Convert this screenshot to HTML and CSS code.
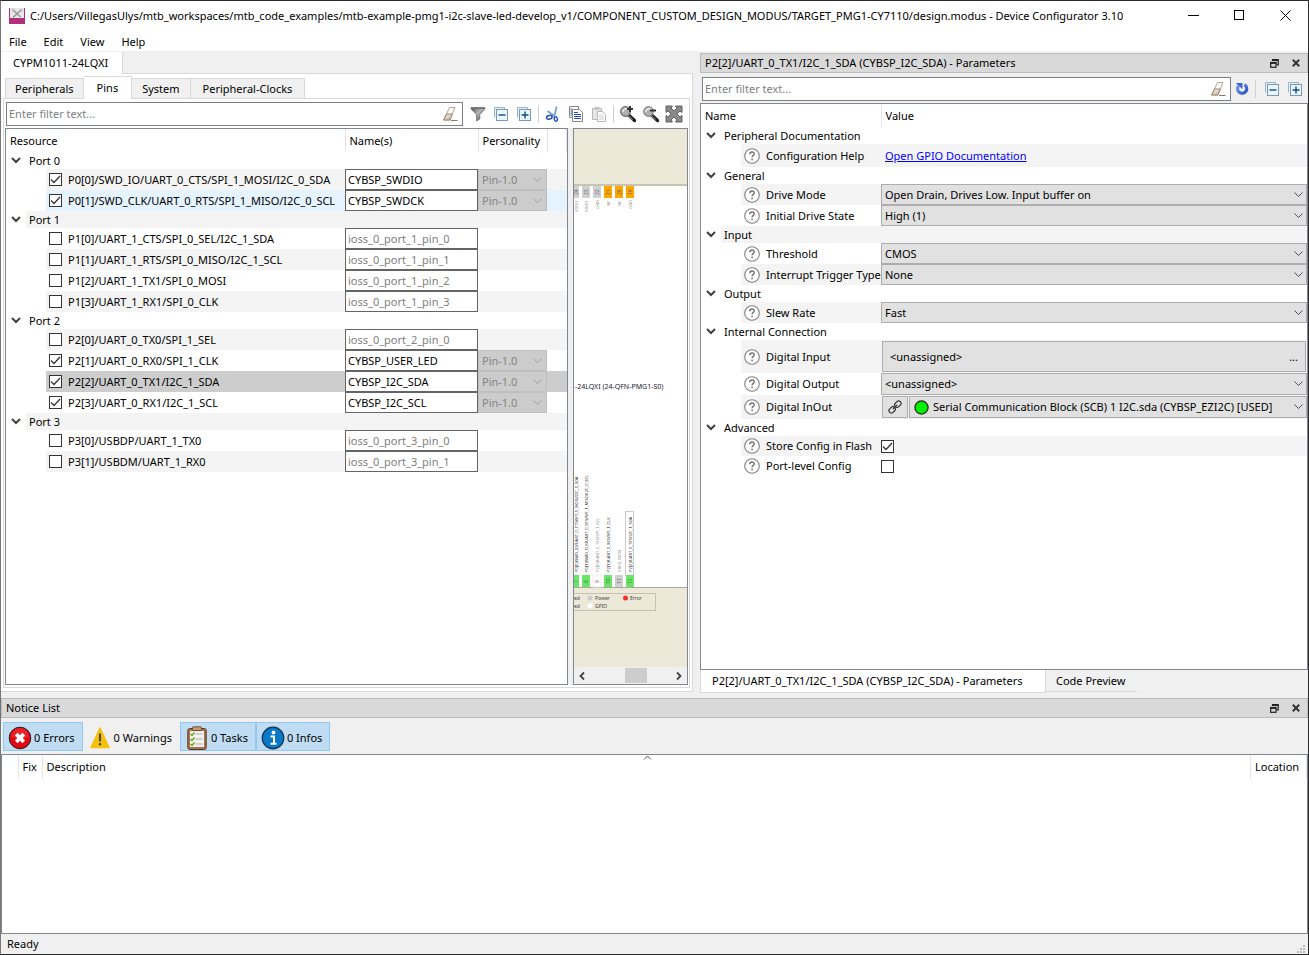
FILE: index.html
```
<!DOCTYPE html>
<html lang="en">
<head>
<meta charset="utf-8">
<title>Device Configurator 3.10</title>
<link rel="stylesheet" href="styles.css">
</head>
<body>
<svg class="defs" aria-hidden="true">
  <defs>
    <linearGradient id="gMetal" x1="0" y1="0" x2="1" y2="1"><stop offset="0" stop-color="#4a4a4a"/><stop offset=".45" stop-color="#b5b5b5"/><stop offset="1" stop-color="#444"/></linearGradient>
    <linearGradient id="gErase" x1="0" y1="0" x2="1" y2="1"><stop offset="0" stop-color="#fff"/><stop offset="1" stop-color="#b9a48c"/></linearGradient>
    <linearGradient id="gBlue" x1="0" y1="0" x2="1" y2="1"><stop offset="0" stop-color="#7fa4ee"/><stop offset="1" stop-color="#1d4fc0"/></linearGradient>
  </defs>
  <symbol id="chev" viewBox="0 0 10 8"><path d="M1 2l4 4 4-4" fill="none" stroke="#404040" stroke-width="2"/></symbol>
  <symbol id="help" viewBox="0 0 16 16"><circle cx="8" cy="8" r="7.3" fill="#fff" stroke="#808080" stroke-width="1.1"/><path d="M5.8 6.3c0-3 4.4-3 4.4-.4 0 1.5-2.1 1.6-2.1 3.4" fill="none" stroke="#757575" stroke-width="1.5"/><rect x="7.3" y="10.6" width="1.6" height="1.6" fill="#757575"/></symbol>
  <symbol id="eraser" viewBox="0 0 16 16"><path d="M7.500 1.500h5.500l-5 12.500H1.500z" fill="#fbf8f4" stroke="#b5a793"/><path d="M4.800 8h5.600l-2.400 6H1.500z" fill="url(#gErase)" stroke="#9c8a74"/><path d="M9 14.500h6.500" stroke="#8f7a60"/></symbol>
  <symbol id="minus" viewBox="0 0 14 14"><path d="M.5 10.500V.5h10v2" fill="#e3f0f8" stroke="#9ab4c8"/><rect x="2.500" y="2.500" width="11" height="11" fill="#eaf6fd" stroke="#7d97ae"/><path d="M4.500 8h7" stroke="#0c4d8c" stroke-width="1.400"/></symbol>
  <symbol id="plus" viewBox="0 0 14 14"><path d="M.5 10.500V.5h10v2" fill="#e3f0f8" stroke="#9ab4c8"/><rect x="2.500" y="2.500" width="11" height="11" fill="#eaf6fd" stroke="#7d97ae"/><path d="M4.500 8h7M8 4.500v7" stroke="#0c4d8c" stroke-width="1.400"/></symbol>
  <symbol id="float" viewBox="0 0 9 9"><path d="M2.500 2V.8h5.700v5H6.500" fill="none" stroke="#222" stroke-width="1.200"/><path d="M2 1h6.500" stroke="#222" stroke-width="2"/><rect x=".7" y="3.500" width="5.300" height="4.800" fill="none" stroke="#222" stroke-width="1.200"/><path d="M.2 4h6.300" stroke="#222" stroke-width="1.800"/></symbol>
  <symbol id="x" viewBox="0 0 8 8"><path d="M.8.8l6.400 6.400M7.200.8L.8 7.200" stroke="#333" stroke-width="2"/></symbol>
</svg>

<div class="window">
  <header class="titlebar">
    <svg class="i16" viewBox="0 0 16 16"><rect width="16" height="16" fill="#b0307c"/><rect x="1" width="14" height="10" fill="#e9e9e9"/><path d="M3.500 1.500l8 7.500M12.500 1.500L4 9.500" stroke="#999" stroke-width="1.700"/><path d="M3 1l3 .5-2.500 2zM11 1.500l3 .5-2 2z" fill="#fff" stroke="#999" stroke-width=".6"/></svg>
    <span class="grow">C:/Users/VillegasUlys/mtb_workspaces/mtb_code_examples/mtb-example-pmg1-i2c-slave-led-develop_v1/COMPONENT_CUSTOM_DESIGN_MODUS/TARGET_PMG1-CY7110/design.modus - Device Configurator 3.10</span>
    <button class="winbtn" aria-label="Minimize"><svg class="i11" viewBox="0 0 11 11"><path d="M0 5.500h11" stroke="#000"/></svg></button>
    <button class="winbtn" aria-label="Maximize"><svg class="i11" viewBox="0 0 11 11"><rect x=".5" y=".5" width="9" height="9" fill="none" stroke="#000"/></svg></button>
    <button class="winbtn" aria-label="Close"><svg class="i11" viewBox="0 0 11 11"><path d="M.5.5l10 10M10.500.5l-10 10" stroke="#000"/></svg></button>
  </header>
  <nav class="menubar"><button>File</button><button>Edit</button><button>View</button><button>Help</button></nav>

  <main class="workspace">
    <section class="device">
      <div class="doctabs"><button class="doctab">CYPM1011-24LQXI</button></div>
      <div class="docpane">
        <div class="tabs"><button>Peripherals</button><button class="on">Pins</button><button>System</button><button>Peripheral-Clocks</button></div>
        <div class="pinpane">
          <div class="toolbar">
            <div class="filter"><input type="text" placeholder="Enter filter text..." aria-label="Filter resources"><svg class="i16" ><use href="#eraser"/></svg></div>
            <button aria-label="Filter"><svg class="i16" viewBox="0 0 16 16"><path d="M1 1.500h14v1.500L9.800 8.500V13L6.500 15V8.500L1 3z" fill="url(#gMetal)" stroke="#666" stroke-width=".7"/><path d="M1 2.200h14" stroke="#777" stroke-width="1.500"/></svg></button>
            <button aria-label="Collapse all"><svg class="i14"><use href="#minus"/></svg></button>
            <button aria-label="Expand all"><svg class="i14"><use href="#plus"/></svg></button>
            <i class="sep"></i>
            <button aria-label="Cut"><svg class="i16" viewBox="0 0 16 16"><path d="M11.500.5L10 8 7 10.500M2.500 5l5.500 4 2.500 2" fill="none" stroke="#7da0cc" stroke-width="1.800"/><ellipse cx="4.300" cy="11.300" rx="2.800" ry="1.800" fill="none" stroke="#2452c4" stroke-width="1.500" transform="rotate(-15 4.300 11.300)"/><ellipse cx="10.800" cy="13" rx="1.500" ry="2.200" fill="none" stroke="#2452c4" stroke-width="1.500" transform="rotate(-15 10.800 13)"/></svg></button>
            <button aria-label="Copy"><svg class="i16" viewBox="0 0 16 16"><path d="M1.500.5h9v11h-9z" fill="#fff" stroke="#888"/><path d="M4.500 3.500h7l3 3v9h-10z" fill="#fff" stroke="#888"/><path d="M2.500 3h1.500M2.500 5h1.500M2.500 7h1.500M2.500 9h1.500M6 6.500h4M6 8.500h7M6 10.500h7M6 12.500h7" stroke="#234bb0"/></svg></button>
            <button aria-label="Paste" class="pale"><svg class="i16" viewBox="0 0 16 16"><path d="M1.500 2.500h9v11h-9z" fill="#ddd" stroke="#999"/><path d="M3.500.8h5v3h-5z" fill="#aaa"/><path d="M6.500 5.500h5l3 3v7h-8z" fill="#fff" stroke="#999"/><path d="M8 9h4M8 11h5M8 13h5" stroke="#bbb"/></svg></button>
            <i class="sep"></i>
            <button aria-label="Zoom in"><svg class="i18" viewBox="0 0 18 18"><path d="M9.500 10l6 5.500" stroke="#222" stroke-width="3.400" stroke-linecap="round"/><path d="M9 10.500l4.500 4.200" stroke="#aaa" stroke-width="1"/><circle cx="6.500" cy="6.500" r="4.800" fill="#b0b0b0" stroke="#666" stroke-width="1.200"/><path d="M3.500 7c1-4 5-4 6-2" fill="none" stroke="#eee" stroke-width="1.400"/><path d="M11 1v6M8 4h6" stroke="#333" stroke-width="2"/></svg></button>
            <button aria-label="Zoom out"><svg class="i18" viewBox="0 0 18 18"><path d="M9.500 10l6 5.500" stroke="#222" stroke-width="3.400" stroke-linecap="round"/><path d="M9 10.500l4.500 4.200" stroke="#aaa" stroke-width="1"/><circle cx="6.500" cy="6.500" r="4.800" fill="#b0b0b0" stroke="#888" stroke-width="1.200"/><path d="M3.500 7c1-4 5-4 6-2" fill="none" stroke="#eee" stroke-width="1.400"/><path d="M8 5.500h6" stroke="#333" stroke-width="2"/></svg></button>
            <button aria-label="Zoom to fit"><svg class="i18" viewBox="0 0 18 18"><path d="M1 1h6.500L6 3l3 3 3-3-1.500-2H17v6.500L15 6l-3 3 3 3 2-1.500V17h-6.500l1.500-2-3-3-3 3 1.500 2H1v-6.500L3 12l3-3-3-3-2 1.500z" fill="#8a8a8a" stroke="#555" stroke-width=".9"/></svg></button>
          </div>
          <div class="split">
            <div class="tree">
              <table class="pins">
                <colgroup><col class="cRes"><col class="cName"><col class="cPers"><col></colgroup>
                <thead><tr><th>Resource</th><th>Name(s)</th><th>Personality</th><th></th></tr></thead>
                <tbody>
                <tr class="group"><td colspan="4"><div class="g"><svg class="chev"><use href="#chev"/></svg><span>Port 0</span></div></td></tr>
                <tr class="alt"><td><label><input type="checkbox" checked>P0[0]/SWD_IO/UART_0_CTS/SPI_1_MOSI/I2C_0_SDA</label></td><td><input type="text" value="CYBSP_SWDIO" aria-label="Name of P0[0]"></td><td><select disabled aria-label="Personality of P0[0]"><option>Pin-1.0</option></select></td><td></td></tr>
                <tr class="hover"><td><label><input type="checkbox" checked>P0[1]/SWD_CLK/UART_0_RTS/SPI_1_MISO/I2C_0_SCL</label></td><td><input type="text" value="CYBSP_SWDCK" aria-label="Name of P0[1]"></td><td><select disabled aria-label="Personality of P0[1]"><option>Pin-1.0</option></select></td><td></td></tr>
                <tr class="group alt"><td colspan="4"><div class="g"><svg class="chev"><use href="#chev"/></svg><span>Port 1</span></div></td></tr>
                <tr><td><label><input type="checkbox">P1[0]/UART_1_CTS/SPI_0_SEL/I2C_1_SDA</label></td><td><input type="text" placeholder="ioss_0_port_1_pin_0" aria-label="Name of P1[0]"></td><td></td><td></td></tr>
                <tr class="alt"><td><label><input type="checkbox">P1[1]/UART_1_RTS/SPI_0_MISO/I2C_1_SCL</label></td><td><input type="text" placeholder="ioss_0_port_1_pin_1" aria-label="Name of P1[1]"></td><td></td><td></td></tr>
                <tr><td><label><input type="checkbox">P1[2]/UART_1_TX1/SPI_0_MOSI</label></td><td><input type="text" placeholder="ioss_0_port_1_pin_2" aria-label="Name of P1[2]"></td><td></td><td></td></tr>
                <tr class="alt"><td><label><input type="checkbox">P1[3]/UART_1_RX1/SPI_0_CLK</label></td><td><input type="text" placeholder="ioss_0_port_1_pin_3" aria-label="Name of P1[3]"></td><td></td><td></td></tr>
                <tr class="group"><td colspan="4"><div class="g"><svg class="chev"><use href="#chev"/></svg><span>Port 2</span></div></td></tr>
                <tr class="alt"><td><label><input type="checkbox">P2[0]/UART_0_TX0/SPI_1_SEL</label></td><td><input type="text" placeholder="ioss_0_port_2_pin_0" aria-label="Name of P2[0]"></td><td></td><td></td></tr>
                <tr><td><label><input type="checkbox" checked>P2[1]/UART_0_RX0/SPI_1_CLK</label></td><td><input type="text" value="CYBSP_USER_LED" aria-label="Name of P2[1]"></td><td><select disabled aria-label="Personality of P2[1]"><option>Pin-1.0</option></select></td><td></td></tr>
                <tr class="selected"><td><label><input type="checkbox" checked>P2[2]/UART_0_TX1/I2C_1_SDA</label></td><td><input type="text" value="CYBSP_I2C_SDA" aria-label="Name of P2[2]"></td><td><select disabled aria-label="Personality of P2[2]"><option>Pin-1.0</option></select></td><td></td></tr>
                <tr><td><label><input type="checkbox" checked>P2[3]/UART_0_RX1/I2C_1_SCL</label></td><td><input type="text" value="CYBSP_I2C_SCL" aria-label="Name of P2[3]"></td><td><select disabled aria-label="Personality of P2[3]"><option>Pin-1.0</option></select></td><td></td></tr>
                <tr class="group alt"><td colspan="4"><div class="g"><svg class="chev"><use href="#chev"/></svg><span>Port 3</span></div></td></tr>
                <tr><td><label><input type="checkbox">P3[0]/USBDP/UART_1_TX0</label></td><td><input type="text" placeholder="ioss_0_port_3_pin_0" aria-label="Name of P3[0]"></td><td></td><td></td></tr>
                <tr class="alt"><td><label><input type="checkbox">P3[1]/USBDM/UART_1_RX0</label></td><td><input type="text" placeholder="ioss_0_port_3_pin_1" aria-label="Name of P3[1]"></td><td></td><td></td></tr>
                </tbody>
              </table>
            </div>
            <div class="package">
              <svg class="chip" viewBox="0 0 113 538" preserveAspectRatio="xMinYMin slice">
                <rect width="113" height="538" fill="#fff"/>
                <rect width="113" height="56" fill="#ece9d8"/><rect y="55" width="113" height="2" fill="#c8c4b4"/>
                <rect y="458" width="113" height="80" fill="#ece9d8"/><rect y="458" width="113" height="1" fill="#aaa698"/>
                <g fill="#d0d0d0"><rect y="57" width="5" height="12"/><rect x="8" y="57" width="8" height="12"/><rect x="19" y="57" width="8" height="12"/><rect x="41" y="446" width="8" height="12"/></g>
                <g fill="#ffa500"><rect x="30" y="57" width="8" height="12"/><rect x="41" y="57" width="8" height="12"/><rect x="52" y="57" width="8" height="12"/></g>
                <g fill="#66e866"><rect y="446" width="5" height="12"/><rect x="8" y="446" width="8" height="12"/><rect x="30" y="446" width="8" height="12"/><rect x="52" y="446" width="8" height="12"/></g>
                <rect x="19" y="446" width="8" height="12" fill="#fff" stroke="#eee"/>
                <rect x="51.500" y="382.500" width="8" height="64" fill="#fff" stroke="#ccc"/>
                <rect x="52" y="446" width="8" height="12" fill="#66e866"/>
                <g class="pinno">
                  <text transform="translate(4 66) rotate(-90)">24</text><text transform="translate(14 66) rotate(-90)">23</text><text transform="translate(25 66) rotate(-90)">22</text><text transform="translate(36 66) rotate(-90)">21</text><text transform="translate(47 66) rotate(-90)">20</text><text transform="translate(58 66) rotate(-90)">19</text>
                  <text transform="translate(4 454) rotate(-90)">7</text><text transform="translate(14 454) rotate(-90)">8</text><text transform="translate(25 454) rotate(-90)">9</text><text transform="translate(36 455) rotate(-90)">10</text><text transform="translate(47 455) rotate(-90)">11</text><text transform="translate(58 455) rotate(-90)">12</text>
                </g>
                <g class="pin faint">
                  <text transform="translate(4 83) rotate(-90)">VDDD</text><text transform="translate(14 83) rotate(-90)">VDDD</text><text transform="translate(25 80) rotate(-90)">GND</text><text transform="translate(36 77) rotate(-90)">NC</text><text transform="translate(47 77) rotate(-90)">NC</text><text transform="translate(58 80) rotate(-90)">GND</text>
                  <text transform="translate(25 443) rotate(-90)">P2[0]/UART_0_TX0/SPI_1_SEL</text><text transform="translate(47 443) rotate(-90)">VBUS_MON</text>
                </g>
                <g class="pin">
                  <text transform="translate(4 443) rotate(-90)">P0[0]/SWD_IO/UART_0_CTS/SPI_1_MOSI/I2C_0_SDA</text><text transform="translate(14 443) rotate(-90)">P0[1]/SWD_CLK/UART_0_RTS/SPI_1_MISO/I2C_0_SCL</text><text transform="translate(36 443) rotate(-90)">P2[1]/UART_0_RX0/SPI_1_CLK</text><text transform="translate(58 443) rotate(-90)">P2[2]/UART_0_TX1/I2C_1_SDA</text>
                </g>
                <text class="part" x="1" y="260">-24LQXI (24-QFN-PMG1-S0)</text>
                <path d="M0 464.500h81.500v17H0" fill="none" stroke="#c6c1ae"/>
                <circle cx="16" cy="469" r="2.500" fill="#ccc"/><circle cx="16" cy="477" r="2.500" fill="#fff"/><circle cx="51.500" cy="469" r="2.500" fill="#f43030"/>
                <g class="legend"><text x="0" y="471">ed</text><text x="0" y="479">ed</text><text x="21" y="471">Power</text><text x="21" y="479">GPIO</text><text x="56" y="471">Error</text></g>
              </svg>
              <div class="hscroll"><svg class="arrow" viewBox="0 0 8 10"><path d="M6 1.500L2.500 5 6 8.500" fill="none" stroke="#444" stroke-width="1.800"/></svg><i class="thumb"></i><svg class="arrow" viewBox="0 0 8 10"><path d="M2 1.500L5.500 5 2 8.500" fill="none" stroke="#444" stroke-width="1.800"/></svg></div>
            </div>
          </div>
        </div>
      </div>
    </section>

    <section class="params">
      <div class="docktitle"><span class="grow">P2[2]/UART_0_TX1/I2C_1_SDA (CYBSP_I2C_SDA) - Parameters</span><button aria-label="Float panel"><svg class="i9"><use href="#float"/></svg></button><button aria-label="Close panel"><svg class="i8"><use href="#x"/></svg></button></div>
      <div class="toolbar">
        <div class="filter"><input type="text" placeholder="Enter filter text..." aria-label="Filter parameters"><svg class="i16"><use href="#eraser"/></svg></div>
        <button aria-label="Reset"><svg class="i14" viewBox="0 0 14 14"><path d="M9.300 2.600a4.600 4.600 0 1 1-5.600 1" fill="none" stroke="url(#gBlue)" stroke-width="3.200"/><path d="M.8 1h6.700v6.200z" fill="#3a68d4"/></svg></button>
        <i class="sep"></i>
        <button aria-label="Collapse all"><svg class="i14"><use href="#minus"/></svg></button>
        <button aria-label="Expand all"><svg class="i14"><use href="#plus"/></svg></button>
      </div>
      <div class="tree">
        <table class="props">
          <colgroup><col class="cProp"><col></colgroup>
          <thead><tr><th>Name</th><th>Value</th></tr></thead>
          <tbody>
          <tr class="group"><td colspan="2"><div class="g"><svg class="chev"><use href="#chev"/></svg><span>Peripheral Documentation</span></div></td></tr>
          <tr class="alt h23"><td><div class="p"><svg class="i16"><use href="#help"/></svg>Configuration Help</div></td><td><a href="#gpio">Open GPIO Documentation</a></td></tr>
          <tr class="group"><td colspan="2"><div class="g"><svg class="chev"><use href="#chev"/></svg><span>General</span></div></td></tr>
          <tr class="alt"><td><label class="p" for="drive"><svg class="i16"><use href="#help"/></svg>Drive Mode</label></td><td><select id="drive"><option>Open Drain, Drives Low. Input buffer on</option></select></td></tr>
          <tr><td><label class="p" for="state"><svg class="i16"><use href="#help"/></svg>Initial Drive State</label></td><td><select id="state"><option>High (1)</option></select></td></tr>
          <tr class="group alt"><td colspan="2"><div class="g"><svg class="chev"><use href="#chev"/></svg><span>Input</span></div></td></tr>
          <tr><td><label class="p" for="thr"><svg class="i16"><use href="#help"/></svg>Threshold</label></td><td><select id="thr"><option>CMOS</option></select></td></tr>
          <tr class="alt"><td><label class="p" for="trig"><svg class="i16"><use href="#help"/></svg>Interrupt Trigger Type</label></td><td><select id="trig"><option>None</option></select></td></tr>
          <tr class="group"><td colspan="2"><div class="g"><svg class="chev"><use href="#chev"/></svg><span>Output</span></div></td></tr>
          <tr class="alt"><td><label class="p" for="slew"><svg class="i16"><use href="#help"/></svg>Slew Rate</label></td><td><select id="slew"><option>Fast</option></select></td></tr>
          <tr class="group"><td colspan="2"><div class="g"><svg class="chev"><use href="#chev"/></svg><span>Internal Connection</span></div></td></tr>
          <tr class="alt h33"><td><label class="p" for="din"><svg class="i16"><use href="#help"/></svg>Digital Input</label></td><td><button class="pick" id="din"><span class="grow">&lt;unassigned&gt;</span><span>...</span></button></td></tr>
          <tr class="h22"><td><label class="p" for="dout"><svg class="i16"><use href="#help"/></svg>Digital Output</label></td><td><select id="dout"><option>&lt;unassigned&gt;</option></select></td></tr>
          <tr class="alt h24"><td><label class="p" for="dio"><svg class="i16"><use href="#help"/></svg>Digital InOut</label></td><td><div class="linked"><button class="link" aria-label="Go to connection"><svg class="i14" viewBox="0 0 14 14"><g transform="rotate(-45 7 7)" fill="none" stroke="#333" stroke-width="1.200"><rect x="-.5" y="4.600" width="7" height="4.800" rx="2.400"/><rect x="7.500" y="4.600" width="7" height="4.800" rx="2.400"/><path d="M4 7h6"/></g></svg></button><select id="dio" class="used"><option>Serial Communication Block (SCB) 1 I2C.sda (CYBSP_EZI2C) [USED]</option></select></div></td></tr>
          <tr class="group"><td colspan="2"><div class="g"><svg class="chev"><use href="#chev"/></svg><span>Advanced</span></div></td></tr>
          <tr class="alt h20"><td><label class="p" for="flash"><svg class="i16"><use href="#help"/></svg>Store Config in Flash</label></td><td><input type="checkbox" id="flash" checked></td></tr>
          <tr class="h20"><td><label class="p" for="port"><svg class="i16"><use href="#help"/></svg>Port-level Config</label></td><td><input type="checkbox" id="port"></td></tr>
          </tbody>
        </table>
      </div>
      <div class="docktabs"><button class="on">P2[2]/UART_0_TX1/I2C_1_SDA (CYBSP_I2C_SDA) - Parameters</button><button>Code Preview</button></div>
    </section>
  </main>

  <section class="notices">
    <div class="docktitle"><span class="grow">Notice List</span><button aria-label="Float panel"><svg class="i9"><use href="#float"/></svg></button><button aria-label="Close panel"><svg class="i8"><use href="#x"/></svg></button></div>
    <div class="counts">
      <button class="on"><svg class="i24" viewBox="0 0 24 24"><circle cx="12" cy="12" r="10.800" fill="#e30613" stroke="#222" stroke-width="1"/><path d="M3 11a9 9 0 0 1 18 0q-9 3-18 0z" fill="#f04040" opacity=".5"/><path d="M8.200 8.200l7.600 7.600M15.800 8.200l-7.600 7.600" stroke="#fff" stroke-width="3.800"/></svg>0 Errors</button>
      <button><svg class="i24" viewBox="0 0 24 24"><path d="M12 2L21 21.500H3z" fill="#f5c211" stroke="#f5c211" stroke-width="1.500" stroke-linejoin="round"/><path d="M12 7.500v8" stroke="#5a4a20" stroke-width="2.200"/><circle cx="12" cy="18.200" r="1.300" fill="#5a4a20"/></svg>0 Warnings</button>
      <button class="on"><svg class="i24" viewBox="0 0 24 24"><rect x="2.800" y="2.500" width="18.400" height="21" rx="2" fill="#a9714b" stroke="#5e3820" stroke-width="1"/><rect x="5" y="5" width="14" height="16" fill="#f4f2ee"/><rect x="7.500" y=".8" width="9" height="3.800" rx="1" fill="#c79b78" stroke="#5e3820" stroke-width=".8"/><path d="M10.500 8h7M10.500 13h7M10.500 18h7" stroke="#aaa" stroke-width="1.200"/><path d="M5.500 8l1.500 1.500L9.500 6.500M5.500 13l1.500 1.500 2.500-3M5.500 18l1.500 1.500 2.500-3" fill="none" stroke="#62a820" stroke-width="1.400"/></svg>0 Tasks</button>
      <button class="on"><svg class="i24" viewBox="0 0 24 24"><circle cx="12" cy="12" r="10.800" fill="#0878c8" stroke="#16324a" stroke-width="1.200"/><circle cx="12.500" cy="6.500" r="1.900" fill="#fff"/><path d="M9.500 10.500h3.500v7M9.500 17.800h6" fill="none" stroke="#fff" stroke-width="2"/></svg>0 Infos</button>
    </div>
    <div class="noticebox">
      <table class="log"><colgroup><col class="cMark"><col class="cFix"><col><col class="cLoc"></colgroup><thead><tr><th></th><th>Fix</th><th>Description</th><th>Location</th></tr></thead></table>
      <svg class="sort" viewBox="0 0 9 5"><path d="M1 4.500l3.500-3.500L8 4.500" fill="none" stroke="#555"/></svg>
    </div>
  </section>
  <footer class="status"><span class="grow">Ready</span><svg class="grip" viewBox="0 0 9 9"><path d="M6 0h2v2H6zM3 3h2v2H3zM6 3h2v2H6zM0 6h2v2H0zM3 6h2v2H3zM6 6h2v2H6z" fill="#bbb"/></svg></footer>
</div>
</body>
</html>
```
FILE: styles.css
```
* { box-sizing: border-box; }
body { margin: 0; }
body, button, input, select { font: 11px/16px "Noto Sans", "Open Sans", sans-serif; color: #000; }
button { border: 0; padding: 0; background: none; white-space: nowrap; }
svg { display: block; flex: none; }
.defs { position: absolute; width: 0; height: 0; }
.i8 { width: 8px; height: 8px; }
.i9 { width: 9px; height: 9px; }
.i11 { width: 11px; height: 11px; }
.i14 { width: 14px; height: 14px; }
.i16 { width: 16px; height: 16px; }
.i18 { width: 18px; height: 18px; }
.i24 { width: 24px; height: 24px; }
.grow { flex: 1; min-width: 0; text-align: left; }

.window { display: flex; flex-direction: column; height: 100vh; background: #f0f0f0; border: 1px solid #2b2b2b; border-left-color: #777; }

/* title and menu */
.titlebar { display: flex; align-items: center; height: 29px; padding-left: 8px; background: #fff; white-space: nowrap; }
.titlebar .grow { padding-left: 5px; overflow: hidden; }
.winbtn { display: grid; place-items: center; width: 46px; height: 29px; }
.menubar { display: flex; height: 21px; background: #fff; padding-left: 1px; }
.menubar button { padding: 2px 7px 0; }
.menubar button + button { padding-left: 10px; }

.workspace { flex: 1; min-height: 0; display: grid; grid-template-columns: minmax(0, 692fr) minmax(0, 608fr); gap: 7px; padding-top: 1px; }

/* device document */
.device { display: flex; flex-direction: column; min-height: 0; padding-bottom: 6px; }
.doctabs { display: flex; border-bottom: 1px solid #d9d9d9; }
.doctab { height: 22px; margin-bottom: -1px; padding: 0 12px; background: #fff; border-right: 1px solid #d9d9d9; min-width: 122px; text-align: left; }
.docpane { flex: 1; min-height: 0; display: flex; flex-direction: column; background: #fff; border-right: 1px solid #d9d9d9; border-bottom: 1px solid #d9d9d9; padding: 2px 2px 3px 2px; }
.tabs { display: flex; align-items: flex-end; padding-left: 2px; height: 22px; }
.tabs button { height: 20px; padding: 0 10px; background: #f0f0f0; border: 1px solid #d9d9d9; border-left: 0; border-bottom: 0; }
.tabs button:first-child { border-left: 1px solid #d9d9d9; padding: 0 9px; }
.tabs .on { height: 23px; margin-bottom: -1px; background: #fff; padding: 0 13px; z-index: 1; }
.tabs button:last-child { padding: 0 12px; }
.pinpane { flex: 1; min-height: 0; display: flex; flex-direction: column; border: 1px solid #d9d9d9; padding: 2px 1px; }

.toolbar { display: flex; align-items: center; gap: 9px; height: 27px; }
.toolbar button { display: grid; place-items: center; }
.device .toolbar { gap: 7px; padding: 0 6px 2px 0; }
.device .toolbar button { width: 16px; height: 18px; place-content: center; }
.filter { flex: 1; display: flex; align-items: center; height: 24px; margin-left: 1px; padding-right: 4px; background: #fff; border: 1px solid #7a7f88; }
.filter input { flex: 1; min-width: 0; border: 0; padding: 0 2px; background: none; outline: 0; }
::placeholder { color: #808080; opacity: 1; }
.sep { width: 1px; height: 18px; background: #d0d0d0; }
.device .sep { margin: 0 -1px; }
.pale { opacity: .7; }

.split { flex: 1; min-height: 0; display: grid; grid-template-columns: minmax(0, 563fr) minmax(0, 115fr); gap: 5px; background: #f0f0f0; }
.tree { background: #fff; border: 1px solid #828790; overflow: hidden; min-height: 0; }
table { width: 100%; border-collapse: collapse; table-layout: fixed; }
td, th { padding: 0; height: 21px; text-align: left; font-weight: normal; white-space: nowrap; }
th { height: 23px; padding: 1px 4px 0; border-right: 1px solid #e5e5e5; }
.cRes { width: 339px; }
.cName { width: 133px; }
.cPers { width: 69px; }
.cProp { width: 180px; }
.group td { height: 17px; }
.g { display: flex; align-items: center; height: 17px; }
.g span { flex: 1; height: 17px; line-height: 17px; padding-left: 3px; }
.chev { width: 10px; height: 8px; margin: 0 5px 2px; }
.alt .g span, .alt label, .alt td + td, .alt .p { background: #f4f4f4; }
.hover label, .hover td + td { background: #e5f3ff; }
.selected label, .selected td + td { background: #cdcdcd; }

.pins label { display: flex; align-items: center; gap: 6px; height: 21px; margin-left: 40px; padding-left: 3px; }
.pins input[type=text] { display: block; width: 100%; height: 21px; padding: 0 2px; background: #fff; border: 1px solid #646464; border-radius: 0; }
input[type=checkbox] { appearance: none; display: block; flex: none; width: 13px; height: 13px; margin: 0; background: #fff; border: 1px solid #333; }
input[type=checkbox]:checked { background: #fff url("data:image/svg+xml,%3Csvg xmlns='http://www.w3.org/2000/svg' viewBox='0 0 11 11'%3E%3Cpath d='M1 5.500l3 3L10 2' fill='none' stroke='%23333' stroke-width='1.300'/%3E%3C/svg%3E"); }
select { appearance: none; display: block; width: 100%; height: 21px; padding: 0 22px 0 3px; border: 1px solid #adadad; border-radius: 0; background: #e1e1e1 url("data:image/svg+xml,%3Csvg xmlns='http://www.w3.org/2000/svg' width='9' height='6' viewBox='0 0 9 6'%3E%3Cpath d='M.5.5l4 4 4-4' fill='none' stroke='%23505050'/%3E%3C/svg%3E") no-repeat right 3px center; }
select:disabled { opacity: 1; color: #838383; border-color: #bfbfbf; background: #ccc url("data:image/svg+xml,%3Csvg xmlns='http://www.w3.org/2000/svg' width='9' height='6' viewBox='0 0 9 6'%3E%3Cpath d='M.5.5l4 4 4-4' fill='none' stroke='%23a0a0a0'/%3E%3C/svg%3E") no-repeat right 4px center; }

/* package drawing */
.package { display: flex; flex-direction: column; min-height: 0; border: 1px solid #828790; background: #ece9d8; }
.chip { flex: 1; min-height: 0; width: 100%; }
.chip text { font-family: "Noto Sans", sans-serif; font-size: 5px; fill: #666; }
.chip .pin text { font-size: 4px; fill: #222; }
.chip .faint text { fill: #888; }
.chip .part { font-size: 7px; fill: #223; }
.chip .legend text { fill: #444; }
.hscroll { display: flex; align-items: center; height: 17px; padding: 0 4px; background: #f0f0f0; }
.arrow { width: 8px; height: 10px; }
.thumb { width: 22px; height: 15px; margin-left: 39px; margin-right: auto; background: #cdcdcd; }

/* docks */
.docktitle { display: flex; align-items: center; gap: 13px; height: 20px; padding: 0 7px 0 4px; background: #d9d9d9; border: 1px solid #bcbcbc; }
.params { display: flex; flex-direction: column; min-height: 0; padding: 1px 0 5px; }
.params .toolbar { height: 30px; padding: 2px 6px 0 1px; }
.params .filter { margin-right: -5px; }
.params .sep { margin-left: -3px; }
.params .tree { flex: 1; }
.props th:last-child { border-right: 0; }
.props .p { display: flex; align-items: center; gap: 6px; height: 21px; margin-left: 40px; padding-left: 3px; }
.h20 td, .props .h20 .p { height: 20px; }
.h22 td, .props .h22 .p, .h22 select { height: 22px; }
.h23 td, .props .h23 .p { height: 23px; }
.h24 td, .props .h24 .p { height: 24px; }
.h33 td, .props .h33 .p { height: 33px; }
a { color: #00f; margin-left: 4px; }
.pick { display: flex; align-items: center; width: calc(100% - 2px); height: 31px; margin-left: 1px; padding: 0 7px; background: #e1e1e1; border: 1px solid #adadad; }
.linked { display: flex; gap: 1px; padding-left: 1px; }
.link { display: grid; place-items: center; width: 26px; height: 22px; background: #e1e1e1; border: 1px solid #adadad; }
.linked select { flex: 1; min-width: 0; height: 22px; }
.used { padding-left: 23px; background-image: url("data:image/svg+xml,%3Csvg xmlns='http://www.w3.org/2000/svg' width='9' height='6' viewBox='0 0 9 6'%3E%3Cpath d='M.5.5l4 4 4-4' fill='none' stroke='%23505050'/%3E%3C/svg%3E"), url("data:image/svg+xml,%3Csvg xmlns='http://www.w3.org/2000/svg' width='15' height='15' viewBox='0 0 15 15'%3E%3Ccircle cx='7.500' cy='7.500' r='6.600' fill='%2300f000' stroke='%23222' stroke-width='1.200'/%3E%3C/svg%3E"); background-position: right 3px center, left 4px center; background-repeat: no-repeat; }
.docktabs { display: flex; align-items: flex-start; }
.docktabs button { height: 22px; padding: 0 12px 0 10px; border-bottom: 1px solid #d9d9d9; }
.docktabs .on { height: 23px; padding: 0 11px; min-width: 346px; text-align: left; background: #fff; border: 1px solid #d9d9d9; border-top: 0; }

/* notices */
.notices { flex: none; }
.counts { display: flex; align-items: center; height: 36px; padding: 1px 0 0 2px; }
.counts button { display: flex; align-items: center; gap: 2px; height: 29px; padding: 2px 7px 0 4px; border: 1px solid transparent; }
.counts .on { background: #bfdcf3; border-color: #90c8f6; }
.noticebox { position: relative; height: 180px; background: #fff; border: 1px solid #828790; }
.cMark { width: 16px; }
.cFix { width: 24px; }
.cLoc { width: 56px; }
.sort { position: absolute; left: 50%; top: 0; width: 9px; height: 5px; margin-left: -12px; }
.status { display: flex; align-items: center; height: 20px; padding: 0 2px 0 6px; }
.grip { width: 9px; height: 9px; align-self: flex-end; }
```
